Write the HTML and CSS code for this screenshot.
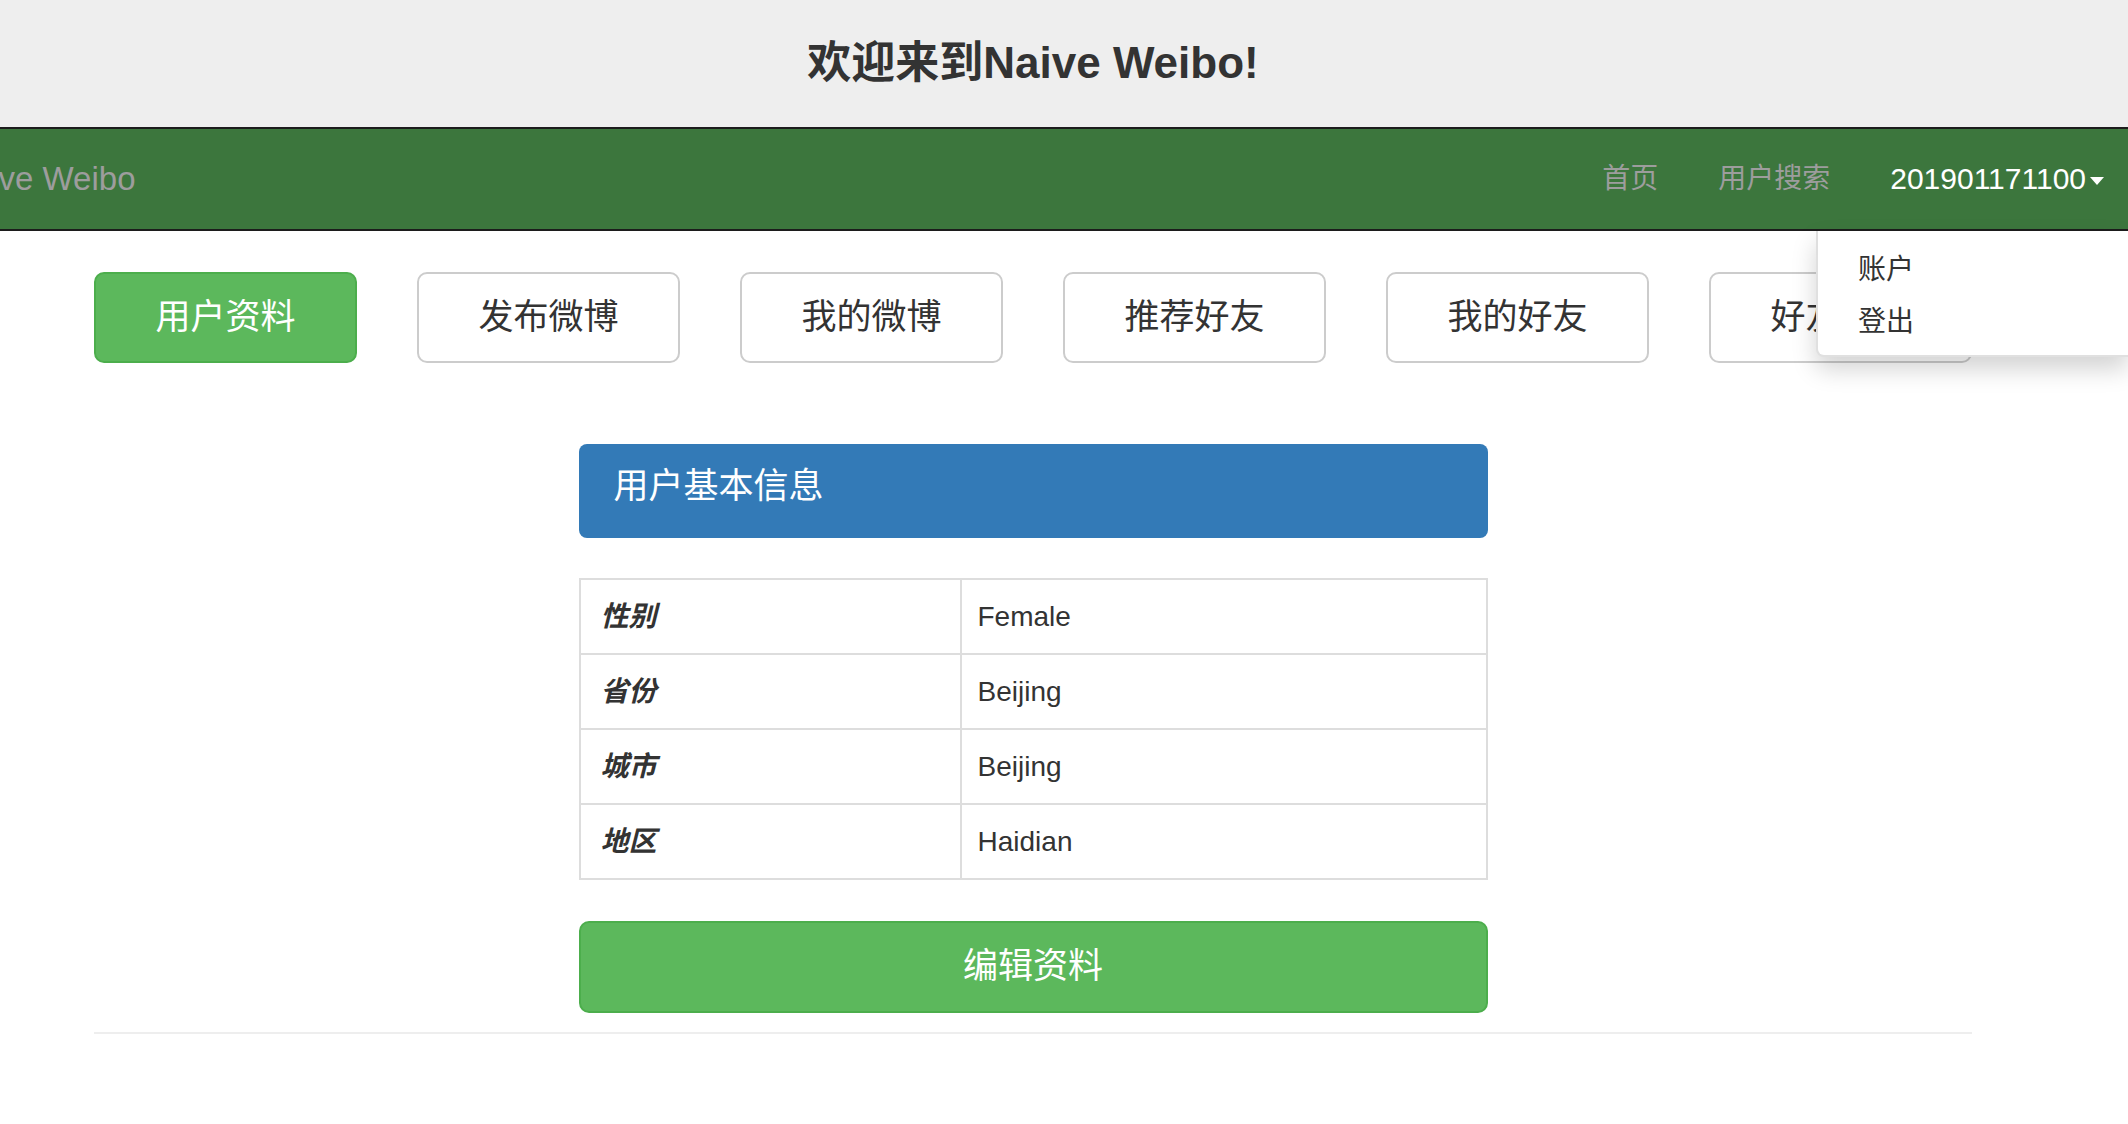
FILE: index.html
```html
<!DOCTYPE html>
<html lang="zh-CN">
<head>
<meta charset="utf-8">
<title>Naive Weibo</title>
<link rel="stylesheet" href="styles.css">
</head>
<body>
<header class="site-header">
  <div class="container">
    <h1 class="site-title">欢迎来到Naive Weibo!</h1>
  </div>
</header>
<nav class="navbar">
  <a class="brand" href="#">Naive Weibo</a>
  <ul class="nav-links">
    <li><a href="#">首页</a></li>
    <li><a href="#">用户搜索</a></li>
    <li class="dropdown">
      <a class="dropdown-toggle" href="#">201901171100<span class="caret"></span></a>
      <ul class="dropdown-menu">
        <li><a href="#">账户</a></li>
        <li><a href="#">登出</a></li>
      </ul>
    </li>
  </ul>
</nav>
<main class="container">
  <div class="tabs">
    <a class="tab-btn active" href="#">用户资料</a>
    <a class="tab-btn" href="#">发布微博</a>
    <a class="tab-btn" href="#">我的微博</a>
    <a class="tab-btn" href="#">推荐好友</a>
    <a class="tab-btn" href="#">我的好友</a>
    <a class="tab-btn" href="#">好友动态</a>
  </div>
  <section class="profile">
    <div class="panel-heading">用户基本信息</div>
    <table class="info-table">
      <colgroup><col class="col-label"><col></colgroup>
      <tbody>
        <tr><td class="label-cell">性别</td><td>Female</td></tr>
        <tr><td class="label-cell">省份</td><td>Beijing</td></tr>
        <tr><td class="label-cell">城市</td><td>Beijing</td></tr>
        <tr><td class="label-cell">地区</td><td>Haidian</td></tr>
      </tbody>
    </table>
    <a class="edit-btn" href="#">编辑资料</a>
  </section>
  <hr class="divider">
</main>
</body>
</html>
```
FILE: styles.css
```css
html, body {
  margin: 0;
  padding: 0;
}
body {
  font-family: "Liberation Sans", "Noto Sans CJK SC", sans-serif;
  color: #333;
  background: #fff;
  font-size: 28px;
}
a {
  text-decoration: none;
}
.container {
  width: 1878px;
  margin-left: 94px;
}
.site-header {
  background: #eee;
  height: 127px;
  display: flex;
  align-items: center;
}
.site-title {
  margin: 0;
  text-align: center;
  font-size: 44px;
  font-weight: bold;
  line-height: 1.1;
  color: #333;
}
.navbar {
  background: #3c763d;
  border-top: 2px solid #1c1c1c;
  border-bottom: 2px solid #1c1c1c;
  height: 100px;
  display: flex;
  justify-content: space-between;
  align-items: stretch;
}
.brand {
  margin-left: -51px;
  font-size: 33px;
  line-height: 100px;
  color: #9d9d9d;
}
.nav-links {
  list-style: none;
  margin: 0;
  padding: 0;
  display: flex;
}
.nav-links > li {
  position: relative;
}
.nav-links > li > a {
  display: block;
  padding: 0 30px;
  line-height: 100px;
  color: #9d9d9d;
  font-size: 28px;
}
.nav-links > li > a.dropdown-toggle {
  color: #fff;
  font-size: 30px;
  padding-right: 24px;
}
.caret {
  display: inline-block;
  width: 0;
  height: 0;
  margin-left: 4px;
  vertical-align: middle;
  border-top: 8px solid #fff;
  border-left: 7px solid transparent;
  border-right: 7px solid transparent;
}
.dropdown-menu {
  position: absolute;
  top: 102px;
  right: 0;
  width: 312px;
  box-sizing: border-box;
  margin: 0;
  padding: 13px 0 7px;
  list-style: none;
  background: #fff;
  border-left: 2px solid rgba(0, 0, 0, 0.12);
  border-bottom: 2px solid rgba(0, 0, 0, 0.12);
  border-radius: 0 0 0 8px;
  box-shadow: 0 12px 24px rgba(0, 0, 0, 0.175);
  z-index: 10;
}
.dropdown-menu a {
  display: block;
  padding: 6px 40px;
  line-height: 40px;
  color: #333;
  font-size: 28px;
}
.tabs {
  display: grid;
  grid-template-columns: repeat(6, 263px);
  column-gap: 60px;
  margin-top: 41px;
}
.tab-btn {
  height: 91px;
  box-sizing: border-box;
  padding-bottom: 8px;
  border: 2px solid #ccc;
  border-radius: 10px;
  background: #fff;
  color: #333;
  font-size: 35px;
  display: flex;
  align-items: center;
  justify-content: center;
}
.tab-btn.active {
  background: #5cb85c;
  border-color: #4cae4c;
  color: #fff;
}
.profile {
  width: 909px;
  margin: 81px auto 0;
}
.panel-heading {
  height: 94px;
  box-sizing: border-box;
  background: #337ab7;
  border-radius: 8px;
  padding: 18px 35px 0;
  color: #fff;
  font-size: 35px;
  line-height: 48px;
}
.info-table {
  width: 100%;
  margin-top: 40px;
  border-collapse: collapse;
  table-layout: fixed;
}
.col-label {
  width: 381px;
}
.info-table td {
  border: 2px solid #ddd;
  padding: 16px 16px;
  line-height: 41px;
  font-size: 28px;
  color: #333;
}
.info-table td.label-cell {
  padding-left: 20px;
  font-weight: bold;
  font-style: italic;
}
.edit-btn {
  display: block;
  margin-top: 41px;
  height: 92px;
  box-sizing: border-box;
  background: #5cb85c;
  border: 2px solid #4cae4c;
  border-radius: 10px;
  color: #fff;
  font-size: 35px;
  text-align: center;
  line-height: 86px;
}
.divider {
  margin: 19px 0 0;
  border: 0;
  border-top: 2px solid #eee;
}
```
